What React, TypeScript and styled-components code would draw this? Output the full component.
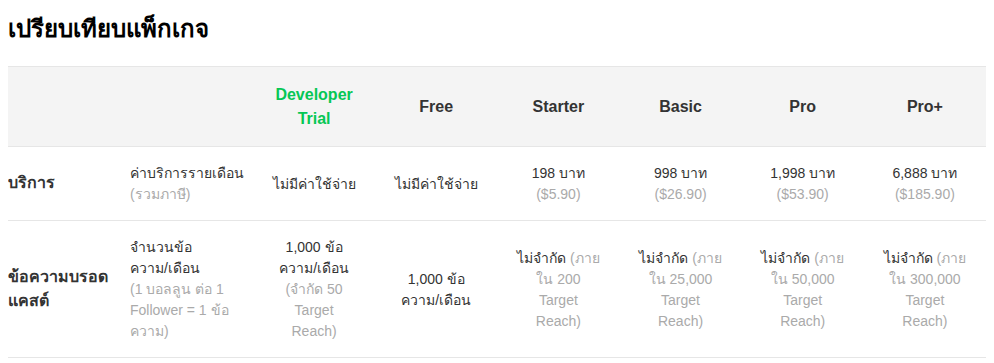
import React from "react";
import styled, { createGlobalStyle } from "styled-components";

const GlobalStyle = createGlobalStyle`
    body {
        margin: 8px;
        background: #ffffff;
        font-family: "Liberation Sans", Arial, Tahoma, sans-serif;
        color: #333333;
    }
`

const Title = styled.h2`
    margin: 6px 0 22px;
    font-size: 24px;
    line-height: 30px;
    font-weight: 700;
    color: #000000;
`

const Table = styled.table`
    width: 100%;
    border-collapse: collapse;
    table-layout: fixed;
    font-size: 14px;
    line-height: 21px;
`

const HeadRow = styled.tr`
    background: #f4f4f4;
    border-top: 1px solid #e6e6e6;
    border-bottom: 1px solid #e6e6e6;
`

const BodyRow = styled.tr`
    border-bottom: 1px solid #e6e6e6;
`

const HeadCell = styled.th<{ $accent?: boolean }>`
    padding: 16px 15px 15px;
    font-size: 16px;
    line-height: 24px;
    font-weight: 700;
    text-align: center;
    color: ${({ $accent }) => $accent ? "#06c755" : "#333333"};
`

const LabelCell = styled.td`
    padding: 15px 0 16px;
    font-size: 16px;
    line-height: 24px;
    font-weight: 700;
    text-align: left;
    vertical-align: middle;
    white-space: nowrap;
`

const DescCell = styled.td`
    padding: 16px 15px 15px;
    text-align: left;
    vertical-align: middle;
    white-space: nowrap;
`

const ValueCell = styled.td`
    padding: 16px 0 15px;
    text-align: center;
    vertical-align: middle;
    white-space: nowrap;
`

const Muted = styled.span`
    color: #aaaaaa;
`

type Line = React.ReactNode

const Lines = ({ items }: { items: Line[] }) => (
    <>
        {items.map((l, i) => (
            <React.Fragment key={i}>
                {i > 0 && <br />}
                {l}
            </React.Fragment>
        ))}
    </>
)

const plans = [
    { name: ["Developer", "Trial"], accent: true },
    { name: ["Free"] },
    { name: ["Starter"] },
    { name: ["Basic"] },
    { name: ["Pro"] },
    { name: ["Pro+"] },
]

const price = (thb: string, usd: string): Line[] => [
    `${thb} บาท`,
    <Muted>({usd})</Muted>,
]

const prices: Line[][] = [
    ["ไม่มีค่าใช้จ่าย"],
    ["ไม่มีค่าใช้จ่าย"],
    price("198", "$5.90"),
    price("998", "$26.90"),
    price("1,998", "$53.90"),
    price("6,888", "$185.90"),
]

const limit = (reach: string): Line[] => [
    <>ไม่จำกัด <Muted>(ภาย</Muted></>,
    <Muted>ใน {reach}</Muted>,
    <Muted>Target</Muted>,
    <Muted>Reach)</Muted>,
]

const messages: Line[][] = [
    [
        "1,000 ข้อ",
        "ความ/เดือน",
        <Muted>(จำกัด 50</Muted>,
        <Muted>Target</Muted>,
        <Muted>Reach)</Muted>,
    ],
    ["1,000 ข้อ", "ความ/เดือน"],
    limit("200"),
    limit("25,000"),
    limit("50,000"),
    limit("300,000"),
]

const App = () => {
    return (
        <>
            <GlobalStyle />
            <Title>เปรียบเทียบแพ็กเกจ</Title>
            <Table>
                <colgroup>
                    <col style={{ width: "107px" }} />
                    <col style={{ width: "138px" }} />
                    {plans.map(p => <col key={p.name.join(" ")} />)}
                </colgroup>
                <thead>
                    <HeadRow>
                        <HeadCell />
                        <HeadCell />
                        {plans.map(p => (
                            <HeadCell key={p.name.join(" ")} $accent={p.accent}>
                                <Lines items={p.name} />
                            </HeadCell>
                        ))}
                    </HeadRow>
                </thead>
                <tbody>
                    <BodyRow>
                        <LabelCell>บริการ</LabelCell>
                        <DescCell>
                            <Lines items={["ค่าบริการรายเดือน", <Muted>(รวมภาษี)</Muted>]} />
                        </DescCell>
                        {prices.map((v, i) => (
                            <ValueCell key={i}><Lines items={v} /></ValueCell>
                        ))}
                    </BodyRow>
                    <BodyRow>
                        <LabelCell>
                            <Lines items={["ข้อความบรอด", "แคสต์"]} />
                        </LabelCell>
                        <DescCell>
                            <Lines
                                items={[
                                    "จำนวนข้อ",
                                    "ความ/เดือน",
                                    <Muted>(1 บอลลูน ต่อ 1</Muted>,
                                    <Muted>Follower = 1 ข้อ</Muted>,
                                    <Muted>ความ)</Muted>,
                                ]}
                            />
                        </DescCell>
                        {messages.map((v, i) => (
                            <ValueCell key={i}><Lines items={v} /></ValueCell>
                        ))}
                    </BodyRow>
                </tbody>
            </Table>
        </>
    )
}

export default App
